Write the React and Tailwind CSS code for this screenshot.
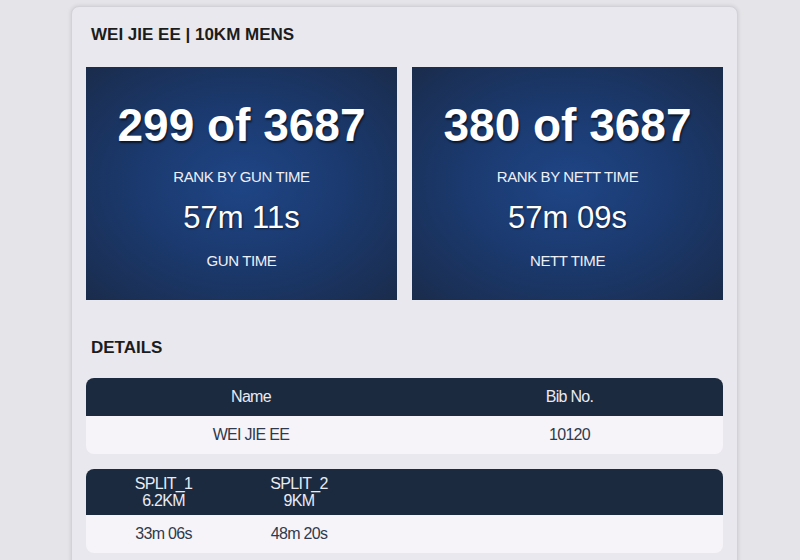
import React from 'react';

const stats = [
    { rank: '299 of 3687', rankLabel: 'RANK BY GUN TIME', time: '57m 11s', timeLabel: 'GUN TIME' },
    { rank: '380 of 3687', rankLabel: 'RANK BY NETT TIME', time: '57m 09s', timeLabel: 'NETT TIME' },
];

const splits = [
    { name: 'SPLIT_1', dist: '6.2KM', time: '33m 06s' },
    { name: 'SPLIT_2', dist: '9KM', time: '48m 20s' },
];

const StatBox = ({ rank, rankLabel, time, timeLabel }) => (
    <div className="h-[233px] flex flex-col items-center text-white bg-[radial-gradient(ellipse_at_center,#1f4585_0%,#1b3a70_45%,#1a2c4c_100%)]">
        <div className="mt-[32px] text-[46px] leading-[52px] font-bold [text-shadow:1px_2px_2px_rgba(0,0,0,0.6)]">{rank}</div>
        <div className="mt-[17px] text-[15px] leading-[18px] tracking-[-0.4px] text-[#eef0f6]">{rankLabel}</div>
        <div className="mt-[14px] text-[31px] leading-[36px] [text-shadow:1px_1px_2px_rgba(0,0,0,0.5)]">{time}</div>
        <div className="mt-[16px] text-[15px] leading-[18px] tracking-[-0.4px] text-[#eef0f6]">{timeLabel}</div>
    </div>
);

export default function App() {
    return (
        <div className="min-h-[560px] h-[560px] overflow-hidden bg-[#e5e4e9] font-['Liberation_Sans',Arial,sans-serif]">
            <div className="ml-[71px] w-[667px] mt-[6px] rounded-t-[8px] border border-[#d3d2d8] bg-[#e9e8ee] shadow-[0_0_4px_rgba(0,0,0,0.12)] px-[14px] pb-8">
                <h1 className="mt-[18px] ml-[5px] text-[17px] leading-[20px] font-bold text-[#1c1c1c]">WEI JIE EE | 10KM MENS</h1>

                <div className="mt-[22px] grid grid-cols-2 gap-[15px]">
                    {stats.map((s) => (
                        <StatBox key={s.rank} {...s} />
                    ))}
                </div>

                <h2 className="mt-[38px] ml-[5px] text-[17px] leading-[20px] font-bold text-[#1c1c1c]">DETAILS</h2>

                <div className="mt-[20px] rounded-[8px] overflow-hidden text-[16px] tracking-[-0.7px]">
                    <div className="grid grid-cols-[330px_1fr] h-[38px] items-center bg-[#1b2a3f] text-[#e9ebf2] text-center">
                        <div>Name</div>
                        <div>Bib No.</div>
                    </div>
                    <div className="grid grid-cols-[330px_1fr] h-[38px] items-center bg-[#f6f4f9] text-[#2f3a4c] text-center">
                        <div>WEI JIE EE</div>
                        <div>10120</div>
                    </div>
                </div>

                <div className="mt-[15px] rounded-[8px] overflow-hidden text-[16px] tracking-[-0.7px]">
                    <div className="grid grid-cols-[155px_116px_1fr] h-[46px] items-center bg-[#1b2a3f] text-[#e9ebf2] text-center leading-[17px]">
                        {splits.map((s) => (
                            <div key={s.name}>
                                <div>{s.name}</div>
                                <div>{s.dist}</div>
                            </div>
                        ))}
                        <div />
                    </div>
                    <div className="grid grid-cols-[155px_116px_1fr] h-[38px] items-center bg-[#f6f4f9] text-[#2f3a4c] text-center">
                        {splits.map((s) => (
                            <div key={s.name}>{s.time}</div>
                        ))}
                        <div />
                    </div>
                </div>
            </div>
        </div>
    );
}
